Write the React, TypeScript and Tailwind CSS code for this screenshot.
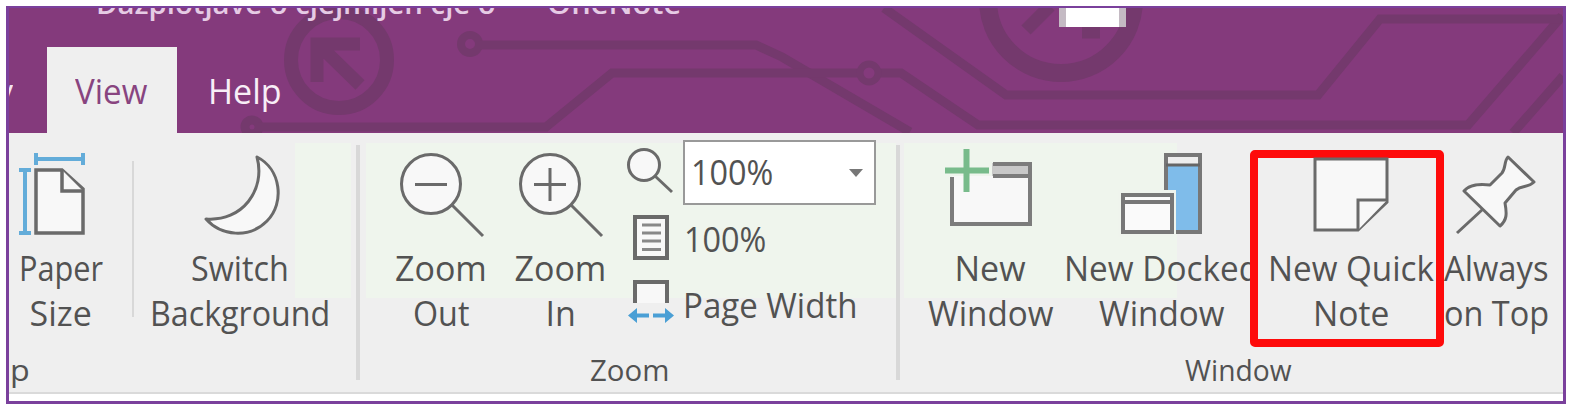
import { useLayoutEffect, useRef } from "react";
import clsx from "clsx";

/** Single line of text condensed or widened to fill its box exactly. */
function Label({ children, className }: { children: string; className: string }) {
  const box = useRef<HTMLDivElement>(null);
  const text = useRef<HTMLSpanElement>(null);
  useLayoutEffect(() => {
    if (box.current && text.current) {
      text.current.style.transform = `scaleX(${box.current.clientWidth / text.current.offsetWidth})`;
    }
  }, [children]);
  return (
    <div ref={box} className={clsx("flex shrink-0 justify-start", className)}>
      <span ref={text} className="block shrink-0 origin-left whitespace-pre">
        {children}
      </span>
    </div>
  );
}

const stroke = { fill: "#f8f8f8", stroke: "#6a6a6a", strokeWidth: 3 };

function Item({
  icon,
  view,
  lines,
  className,
}: {
  icon: React.ReactNode;
  view: string;
  lines: [string, string][];
  className: string;
}) {
  return (
    <div className={clsx("flex shrink-0 flex-col items-center", className)}>
      <svg viewBox={view} className="h-[112px] w-full shrink-0 overflow-visible">
        {icon}
      </svg>
      <div className="flex flex-col items-center pt-px">
        {lines.map(([t, w]) => (
          <Label key={t} className={clsx("h-[45px] text-[34px] leading-[45px]", w)}>
            {t}
          </Label>
        ))}
      </div>
    </div>
  );
}

function Header() {
  return (
    <div className="grid h-[125px] shrink-0 overflow-hidden bg-[#843a7c] [&>*]:col-start-1 [&>*]:row-start-1">
      <svg viewBox="9 8 1554 125" className="h-[125px] w-[1554px]" fill="none" stroke="#74396d" strokeWidth="9">
        <circle cx="339" cy="60" r="48" strokeWidth="14" />
        <path d="M360 44H317V82M320 46L360 85" strokeWidth="13" />
        <circle cx="470" cy="44" r="9" strokeWidth="8" />
        <path d="M480 45H756L782 57L910 132" />
        <circle cx="252" cy="127" r="7" />
        <path d="M258 127H546L612 73H859M880 73H901L978 125H1468L1562 16" />
        <circle cx="869" cy="73" r="9" strokeWidth="7" />
        <path d="M884 8L1006 95H1318L1380 19H1562M1513 133L1563 76" />
        <circle cx="1061" cy="0" r="73" strokeWidth="18" />
        <path d="M1026 30L1050 6M1082 32H1100" strokeWidth="13" />
      </svg>
      <div className="flex h-[19px] items-start overflow-hidden text-[28px] leading-[34px] font-semibold text-[#e6cbe5]">
        <Label className="mt-[-22px] ml-[87px] w-[400px]">Dazplotjave o cjejmljen cje o</Label>
        <Label className="mt-[-22px] ml-[51px] w-[134px]">OneNote</Label>
        <div className="ml-[378px] h-[19px] w-[67px] border-x-[7px] border-[#c4bac3] bg-white" />
      </div>
      <div className="mt-[39px] flex h-[86px] text-[34px] leading-[46px]">
        <div className="h-[70px] w-[4px] overflow-hidden pt-[21px] text-[#f4e4f2]">
          <span className="-ml-[13px] block">y</span>
        </div>
        <div className="ml-[34px] flex w-[130px] bg-[#efefef] pt-[21px] pl-[28px] text-[#88447f]">
          <Label className="w-[72px]">View</Label>
        </div>
        <Label className="mt-[21px] ml-[31px] w-[74px] text-[#f8eef7]">Help</Label>
      </div>
    </div>
  );
}

function Separator({ className }: { className: string }) {
  return <div className={clsx("shrink-0 bg-[#d8d8d8]", className)} />;
}

function Magnifier({ cx, plus }: { cx: number; plus?: boolean }) {
  return (
    <g {...stroke}>
      <circle cx={cx} cy="184" r="29.5" />
      <path d={`M${cx - 16} 184.5h32M${cx + 21} 205l31 31`} />
      {plus && <path d={`M${cx} 168v33`} />}
    </g>
  );
}

function PaperIcon() {
  return (
    <>
      <path {...stroke} strokeWidth="3.5" d="M36 170H62L83 189V233H36Z" />
      <path {...stroke} strokeWidth="3.5" d="M62 170V191H83" />
      <path d="M36 159H82M36 153V165M83 153V165M25 170V233M19 170H31M19 233H31" stroke="#63acd9" strokeWidth="4" />
    </>
  );
}

function NewWindowIcon() {
  return (
    <>
      <path d="M952 176V224H1030V163H992V176Z" fill="#f8f8f8" />
      <path d="M992 163H1030V176H992Z" fill="#c8c8c8" />
      <path d="M952 177V224H1030V164H993M993 176H1030" fill="none" stroke="#7c7c7c" strokeWidth="4" />
      <path d="M966.500 149V192M945 170.500H989" stroke="#78bb8b" strokeWidth="6" />
    </>
  );
}

function DockedIcon() {
  return (
    <>
      <path d="M1166 155H1200V232H1166Z" fill="#7fbcea" stroke="#777" strokeWidth="4" />
      <path d="M1168 157H1198V164H1168Z" fill="#eee" />
      <path d="M1166 165H1200" stroke="#666" strokeWidth="3" />
      <path d="M1118 190H1176V237H1118Z" fill="#eff4ed" />
      <path d="M1123 195H1172V232H1123Z" fill="#fafafa" stroke="#777" strokeWidth="4" />
      <path d="M1123 202H1172" stroke="#777" strokeWidth="4" />
    </>
  );
}

function Ribbon() {
  return (
    <div className="flex h-[261px] shrink-0 flex-col border-b-2 border-[#dadada] bg-[#efefef] text-[#525252]">
      <div className="flex h-[247px] shrink-0 items-start">
        <div className="flex h-full w-[347px] shrink-0 flex-col bg-[linear-gradient(#eff5ed,#eff5ed)] bg-[length:56px_155px] bg-[position:286px_10px] bg-no-repeat">
          <div className="flex h-[218px] shrink-0">
            <Item className="w-[103px]" view="9 133 103 112" icon={<PaperIcon />} lines={[["Paper", "w-[84px]"], ["Size", "w-[62px]"]]} />
            <Separator className="mt-[28px] ml-[20px] h-[156px] w-[2px]" />
            <Item
              className="ml-[7px] w-[198px]"
              view="141 133 198 112"
              icon={<path {...stroke} strokeLinejoin="round" d="M257 157C281 169 285 203 267 221C249 239 221 236 206 219C242 222 266 190 257 157Z" />}
              lines={[["Switch", "w-[98px]"], ["Background", "w-[180px]"]]}
            />
          </div>
          <Label className="-mt-[1px] ml-[1px] w-[20px] text-[29px] leading-[40px]">p</Label>
        </div>
        <Separator className="mt-[12px] h-[235px] w-[4px]" />
        <div className="flex h-full w-[536px] shrink-0 flex-col bg-[linear-gradient(#eff5ed,#eff5ed)] bg-[length:530px_155px] bg-[position:6px_10px] bg-no-repeat">
          <div className="flex h-[218px] shrink-0">
            <Item className="ml-[25px] w-[112px]" view="385 133 112 112" icon={<Magnifier cx={431} />} lines={[["Zoom", "w-[92px]"], ["Out", "w-[56px]"]]} />
            <Item className="ml-[7px] w-[113px]" view="504 133 113 112" icon={<Magnifier cx={550} plus />} lines={[["Zoom", "w-[92px]"], ["In", "w-[30px]"]]} />
            <div className="ml-[8px] flex flex-col text-[34px]">
              <div className="mt-[7px] flex h-[66px]">
                <svg viewBox="625 140 58 66" className="h-[66px] w-[58px]">
                  <circle {...stroke} cx="644" cy="165" r="15.500" />
                  <path {...stroke} d="M655 176L672 192" />
                </svg>
                <div className="flex h-[65px] w-[193px] items-center justify-between border-2 border-[#999] bg-white pr-[11px] pl-[6px]">
                  <Label className="w-[82px] leading-[61px]">100%</Label>
                  <svg viewBox="0 0 14 8" className="h-[8px] w-[14px]">
                    <path d="M0 0H14L7 8Z" fill="#777" />
                  </svg>
                </div>
              </div>
              <div className="flex h-[66px] items-center">
                <svg viewBox="625 206 59 66" className="h-[66px] w-[59px]">
                  <path {...stroke} strokeWidth="4" d="M635 217H667V258H635Z" />
                  <path d="M642 225H661M642 233H661M642 241H661M642 249.500H661" stroke="#888" strokeWidth="3" />
                </svg>
                <Label className="w-[82px] leading-[66px]">100%</Label>
              </div>
              <div className="flex h-[66px] items-center">
                <svg viewBox="625 272 58 66" className="h-[66px] w-[58px]">
                  <path d="M635 303V282H667V303" fill="#f8f8f8" stroke="#6a6a6a" strokeWidth="4" />
                  <path d="M632 315.500H649M653 315.500H670" stroke="#4a9fd5" strokeWidth="4" />
                  <path d="M628 315.500L637 308V323ZM674 315.500L665 308V323Z" fill="#4a9fd5" />
                </svg>
                <Label className="w-[174px] leading-[66px]">Page Width</Label>
              </div>
            </div>
          </div>
          <Label className="-mt-[1px] ml-[230px] w-[79px] text-[29px] leading-[40px]">Zoom</Label>
        </div>
        <Separator className="mt-[12px] h-[235px] w-[4px]" />
        <div className="flex h-full w-[663px] shrink-0 flex-col bg-[linear-gradient(#eff5ed,#eff5ed)] bg-[length:273px_155px] bg-[position:4px_10px] bg-no-repeat">
          <div className="flex h-[218px] shrink-0">
            <Item className="ml-[20px] w-[140px]" view="920 133 140 112" icon={<NewWindowIcon />} lines={[["New", "w-[71px]"], ["Window", "w-[125px]"]]} />
            <Item className="ml-[2px] w-[198px]" view="1062 133 198 112" icon={<DockedIcon />} lines={[["New Docked", "w-[195px]"], ["Window", "w-[125px]"]]} />
            <div className="relative -ml-[10px] mt-[17px] flex h-[197px] w-[194px] shrink-0 flex-col items-start rounded-[5px] border-[8px] border-[#fe0b0b] bg-[#efefef]">
              <Item
                className="-mt-[25px] ml-[4px] w-[178px]"
                view="1262 133 178 112"
                icon={
                  <g {...stroke}>
                    <path d="M1315 159H1387V202L1358 230H1315Z" />
                    <path d="M1358 230V200H1387" />
                  </g>
                }
                lines={[["New Quick", "w-[166px]"], ["Note", "w-[76px]"]]}
              />
            </div>
            <Item
              className="relative -ml-[4px] w-[112px]"
              view="1440 133 112 112"
              icon={
                <path
                  {...stroke}
                  strokeLinejoin="round"
                  d="M1508 157L1534 182C1528 188 1522 185 1516 190L1505 203C1507 214 1507 220 1500 226L1464 191C1470 184 1480 184 1490 185L1502 173C1506 168 1504 161 1508 157ZM1483 209L1457 233"
                />
              }
              lines={[["Always", "w-[105px]"], ["on Top", "w-[105px]"]]}
            />
          </div>
          <Label className="-mt-[1px] ml-[285px] w-[107px] text-[29px] leading-[40px]">Window</Label>
        </div>
      </div>
    </div>
  );
}

export default function App() {
  return (
    <div className="flex h-[413px] w-[1576px] overflow-hidden bg-white pt-[6px] pl-[6px] font-['Open_Sans','Noto_Sans',sans-serif]">
      <div className="flex h-[398px] w-[1560px] shrink-0 flex-col overflow-hidden border-3 border-t-2 border-[#7a409c] bg-white">
        <Header />
        <Ribbon />
      </div>
    </div>
  );
}
